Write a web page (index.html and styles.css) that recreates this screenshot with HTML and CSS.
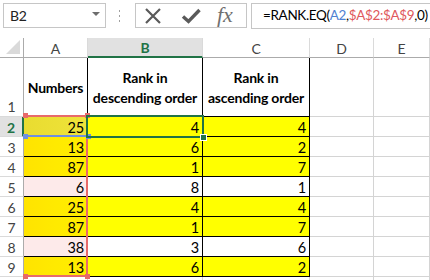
FILE: index.html
```html
<!DOCTYPE html>
<html>
<head>
<meta charset="utf-8">
<link rel="stylesheet" href="styles.css">
</head>
<body>
<div class="fbar">
  <div class="namebox">
    <span class="nb-text">B2</span>
    <svg class="dd" width="8" height="4" viewBox="0 0 8 4"><path d="M0 0H8L4 4Z" fill="#6d6d6d"/></svg>
  </div>
  <div class="dots">
    <svg width="3" height="14" viewBox="0 0 3 14"><rect x="1" y="1" width="1" height="2" fill="#a0a0a0"/><rect x="1" y="6" width="1" height="2" fill="#a0a0a0"/><rect x="1" y="11" width="1" height="2" fill="#a0a0a0"/></svg>
  </div>
  <div class="btns">
    <svg class="ico-x" width="18" height="16" viewBox="0 0 18 16"><path d="M2 1L16 15M16 1L2 15" stroke="#5a5a5a" stroke-width="2.2" fill="none"/></svg>
    <svg class="ico-ok" width="20" height="16" viewBox="0 0 20 16"><path d="M2 8.5L7.5 13.5L18.5 2" stroke="#5a5a5a" stroke-width="3.4" fill="none" stroke-linejoin="miter"/></svg>
    <span class="fx">fx</span>
  </div>
  <div class="formula">=RANK.EQ(<span class="ref-blue">A2</span>,<span class="ref-red">$A$2:$A$9</span>,0)</div>
</div>

<div class="sheet">
  <div class="hd corner"><svg width="14" height="14" viewBox="0 0 14 14"><path d="M14 0V14H0Z" fill="#dadada"/></svg></div>
  <div class="hd col">A</div>
  <div class="hd col sel-col">B</div>
  <div class="hd col">C</div>
  <div class="hd col">D</div>
  <div class="hd col">E</div>

  <div class="rh rh1">1</div>
  <div class="c t tb ta">Numbers</div>
  <div class="c t tb tb-b">Rank in<br>descending order</div>
  <div class="c t tb">Rank in<br>ascending order</div>
  <div class="c g"></div>
  <div class="c g"></div>

  <div class="rh sel-row">2</div>
  <div class="c t n a2">25</div>
  <div class="c t n y">4</div>
  <div class="c t n y">4</div>
  <div class="c g"></div>
  <div class="c g"></div>

  <div class="rh">3</div>
  <div class="c t n ay">13</div>
  <div class="c t n y">6</div>
  <div class="c t n y">2</div>
  <div class="c g"></div>
  <div class="c g"></div>

  <div class="rh">4</div>
  <div class="c t n ay">87</div>
  <div class="c t n y">1</div>
  <div class="c t n y">7</div>
  <div class="c g"></div>
  <div class="c g"></div>

  <div class="rh">5</div>
  <div class="c t n ap">6</div>
  <div class="c t n">8</div>
  <div class="c t n">1</div>
  <div class="c g"></div>
  <div class="c g"></div>

  <div class="rh">6</div>
  <div class="c t n ay">25</div>
  <div class="c t n y">4</div>
  <div class="c t n y">4</div>
  <div class="c g"></div>
  <div class="c g"></div>

  <div class="rh">7</div>
  <div class="c t n ay">87</div>
  <div class="c t n y">1</div>
  <div class="c t n y">7</div>
  <div class="c g"></div>
  <div class="c g"></div>

  <div class="rh">8</div>
  <div class="c t n ap">38</div>
  <div class="c t n">3</div>
  <div class="c t n">6</div>
  <div class="c g"></div>
  <div class="c g"></div>

  <div class="rh">9</div>
  <div class="c t n ay">13</div>
  <div class="c t n y">6</div>
  <div class="c t n y">2</div>
  <div class="c g"></div>
  <div class="c g"></div>

  <div class="rh rh10"></div>
  <div class="c g"></div>
  <div class="c g"></div>
  <div class="c g"></div>
  <div class="c g"></div>
  <div class="c g"></div>

  <div class="range-red">
    <span class="hdl r-tl"></span><span class="hdl r-tr"></span>
    <span class="hdl r-bl"></span><span class="hdl r-br"></span>
  </div>
  <div class="range-blue">
    <span class="hdl b-bl"></span><span class="hdl b-br"></span>
  </div>
  <div class="active"><span class="fill-handle"></span></div>
</div>
</body>
</html>
```

FILE: styles.css
```css
* { box-sizing: border-box; }
html, body {
  margin: 0;
  padding: 0;
  background: #ffffff;
  overflow: hidden;
}
body {
  width: 430px;
  height: 280px;
  font-family: Lato, "Open Sans", sans-serif;
  font-size: 14px;
  letter-spacing: -0.2px;
  color: #000;
}

/* formula bar */
.fbar {
  height: 38px;
  display: flex;
  align-items: flex-start;
  padding-top: 3px;
}
.namebox {
  margin-left: 3px;
  width: 103px;
  height: 25px;
  border: 1px solid #c6c6c6;
  display: flex;
  align-items: center;
  justify-content: space-between;
  padding: 0 5px 0 6px;
}
.nb-text { font-size: 14px; color: #222; }
.dd { margin-bottom: 3px; }
.dots {
  width: 29px;
  height: 25px;
  display: flex;
  align-items: center;
  justify-content: center;
  padding-right: 2px;
}
.btns {
  width: 112px;
  height: 25px;
  border: 1px solid #c6c6c6;
  display: flex;
  align-items: center;
  padding-left: 8px;
}
.ico-ok { margin-left: 19px; }
.fx {
  margin-left: 16px;
  font-family: "Liberation Serif", serif;
  font-style: italic;
  font-size: 22px;
  letter-spacing: 0;
  color: #707070;
  line-height: 1;
  margin-top: -2px;
}
.formula {
  margin-left: 4px;
  flex: 1;
  height: 26px;
  border: 1px solid #c6c6c6;
  border-right: none;
  padding-left: 11px;
  line-height: 23px;
  font-size: 13.5px;
  letter-spacing: -0.35px;
  white-space: nowrap;
  overflow: hidden;
  color: #000;
}
.ref-blue { color: #4f81d3; }
.ref-red { color: #e0585c; }

/* sheet */
.sheet {
  position: relative;
  display: grid;
  grid-template-columns: 24px 64px 115px 107px 64px 1fr;
  grid-template-rows: 20px 59px repeat(8, 20px) 4px;
}
.hd {
  border-right: 1px solid #dadada;
  border-bottom: 1px solid #ababab;
  display: flex;
  align-items: center;
  justify-content: center;
  color: #444;
  font-size: 14px;
  padding-top: 1px;
}
.corner {
  align-items: flex-end;
  justify-content: flex-end;
  padding: 0 3px 3px 0;
  border-right-color: #ababab;
}
.sel-col {
  background: #e1e1e1;
  color: #217346;
  font-weight: bold;
  border-bottom: 2px solid #217346;
}
.rh {
  border-right: 1px solid #ababab;
  border-bottom: 1px solid #dadada;
  display: flex;
  align-items: center;
  justify-content: center;
  color: #444;
  font-size: 14px;
  padding-top: 1px;
}
.rh1 { align-items: flex-end; padding-bottom: 1px; }
.rh10 { border-bottom: none; }
.sel-row {
  background: #e1e1e1;
  color: #217346;
  font-weight: bold;
  border-right: 2px solid #217346;
}
.c {
  border-right: 1px solid #d4d4d4;
  border-bottom: 1px solid #d4d4d4;
}
.t {
  border-right-color: #000;
  border-bottom-color: #000;
}
.tb {
  font-weight: bold;
  text-align: center;
  display: flex;
  align-items: center;
  justify-content: center;
  line-height: 20px;
  padding-top: 1px;
  white-space: nowrap;
}
.n {
  text-align: right;
  padding-right: 3px;
  line-height: 20px;
  padding-top: 1px;
  font-size: 14.5px;
}
.y { background: #ffff00; }
.ay { background: linear-gradient(to right, #ffe300 0%, #ffea00 50%, #ffed00 100%); }
.ap { background: #fdeaea; }
.a2 { background: linear-gradient(to right, #e9dc30 0%, #efe33a 100%); }

/* overlays */
.range-red {
  position: absolute;
  left: 24px;
  top: 77px;
  width: 64px;
  height: 162px;
  border-top: 2px solid #e86a6a;
  border-right: 2px solid #e86a6a;
  border-bottom: 2px solid #e86a6a;
}
.range-blue {
  position: absolute;
  left: 24px;
  top: 77px;
  width: 64px;
  height: 22px;
  border-bottom: 2px solid #6e8fe0;
}
.hdl {
  position: absolute;
  width: 5px;
  height: 5px;
}
.r-tl, .r-tr, .r-bl, .r-br { background: #e86a6a; }
.b-bl, .b-br { background: #6e8fe0; }
.r-tl { left: -1px; top: -4px; }
.r-tr { right: -4px; top: -4px; }
.r-bl { left: -1px; bottom: -4px; }
.r-br { right: -4px; bottom: -4px; }
.b-bl { left: -1px; bottom: -4px; }
.b-br { right: -3px; bottom: -4px; }
.active {
  position: absolute;
  left: 86px;
  top: 77px;
  width: 118px;
  height: 23px;
  border: 2px solid #217346;
}
.fill-handle {
  position: absolute;
  right: -5px;
  bottom: -5px;
  width: 7px;
  height: 7px;
  background: #217346;
  border: 1px solid #fff;
}
```
